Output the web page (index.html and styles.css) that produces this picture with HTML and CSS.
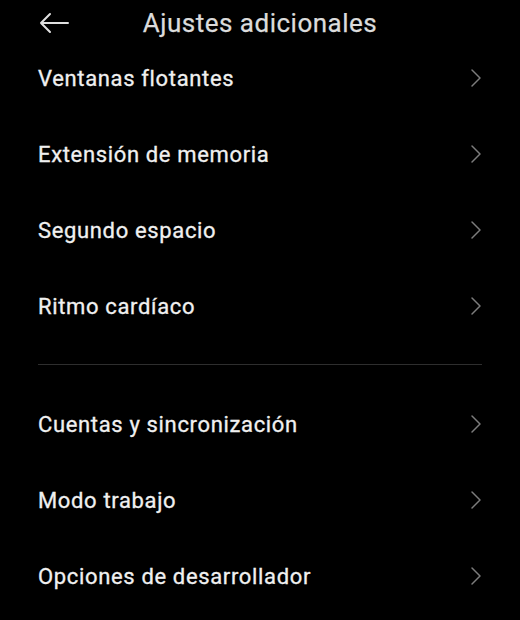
FILE: index.html
```html
<!DOCTYPE html>
<html lang="es">
<head>
<meta charset="utf-8">
<link rel="stylesheet" href="styles.css">
</head>
<body>
<div class="screen">
  <header class="header">
    <svg class="back" width="32" height="22" viewBox="0 0 32 22"><path d="M30 11H3M12 2L3 11l9 9" fill="none" stroke="#e0e0e0" stroke-width="2" stroke-linecap="round" stroke-linejoin="round"/></svg>
    <h1 class="title">Ajustes adicionales</h1>
  </header>
  <ul class="group">
    <li class="row"><span class="label">Ventanas flotantes</span><svg class="chev" width="12" height="20" viewBox="0 0 12 20"><path d="M2 2l8 8-8 8" fill="none" stroke="#7c7c7c" stroke-width="1.5" stroke-linecap="round" stroke-linejoin="round"/></svg></li>
    <li class="row"><span class="label">Extensión de memoria</span><svg class="chev" width="12" height="20" viewBox="0 0 12 20"><path d="M2 2l8 8-8 8" fill="none" stroke="#7c7c7c" stroke-width="1.5" stroke-linecap="round" stroke-linejoin="round"/></svg></li>
    <li class="row"><span class="label">Segundo espacio</span><svg class="chev" width="12" height="20" viewBox="0 0 12 20"><path d="M2 2l8 8-8 8" fill="none" stroke="#7c7c7c" stroke-width="1.5" stroke-linecap="round" stroke-linejoin="round"/></svg></li>
    <li class="row"><span class="label">Ritmo cardíaco</span><svg class="chev" width="12" height="20" viewBox="0 0 12 20"><path d="M2 2l8 8-8 8" fill="none" stroke="#7c7c7c" stroke-width="1.5" stroke-linecap="round" stroke-linejoin="round"/></svg></li>
  </ul>
  <div class="divider"></div>
  <ul class="group">
    <li class="row"><span class="label">Cuentas y sincronización</span><svg class="chev" width="12" height="20" viewBox="0 0 12 20"><path d="M2 2l8 8-8 8" fill="none" stroke="#7c7c7c" stroke-width="1.5" stroke-linecap="round" stroke-linejoin="round"/></svg></li>
    <li class="row"><span class="label">Modo trabajo</span><svg class="chev" width="12" height="20" viewBox="0 0 12 20"><path d="M2 2l8 8-8 8" fill="none" stroke="#7c7c7c" stroke-width="1.5" stroke-linecap="round" stroke-linejoin="round"/></svg></li>
    <li class="row"><span class="label">Opciones de desarrollador</span><svg class="chev" width="12" height="20" viewBox="0 0 12 20"><path d="M2 2l8 8-8 8" fill="none" stroke="#7c7c7c" stroke-width="1.5" stroke-linecap="round" stroke-linejoin="round"/></svg></li>
  </ul>
</div>
</body>
</html>
```
FILE: styles.css
```css
html, body {
  margin: 0;
  padding: 0;
  background: #000;
}
.screen {
  width: 520px;
  height: 620px;
  overflow: hidden;
  background: #000;
  font-family: Roboto, "Noto Sans", sans-serif;
  color: #e8e8e8;
}
.header {
  height: 40px;
  display: flex;
  align-items: center;
  padding: 0 38px;
  box-sizing: border-box;
  padding-top: 5px;
}
.back {
  display: block;
  flex: none;
}
.title {
  margin: 0;
  flex: 1;
  text-align: center;
  font-size: 26px;
  font-weight: 400;
  color: #dcdcdc;
  margin-right: 32px;
  letter-spacing: 0.5px;
  -webkit-text-stroke: 0.25px #dcdcdc;
}
.group {
  list-style: none;
  margin: 0;
  padding: 0 38px;
}
.row {
  height: 76px;
  display: flex;
  align-items: center;
  justify-content: space-between;
}
.label {
  font-size: 22px;
  font-weight: 400;
  color: #f0f0f0;
  letter-spacing: 0.65px;
  -webkit-text-stroke: 0.3px #f0f0f0;
}
.chev {
  display: block;
  margin-right: 0;
}
.divider {
  height: 1px;
  background: #2e2e2e;
  margin: 20px 38px 21px;
}
```
